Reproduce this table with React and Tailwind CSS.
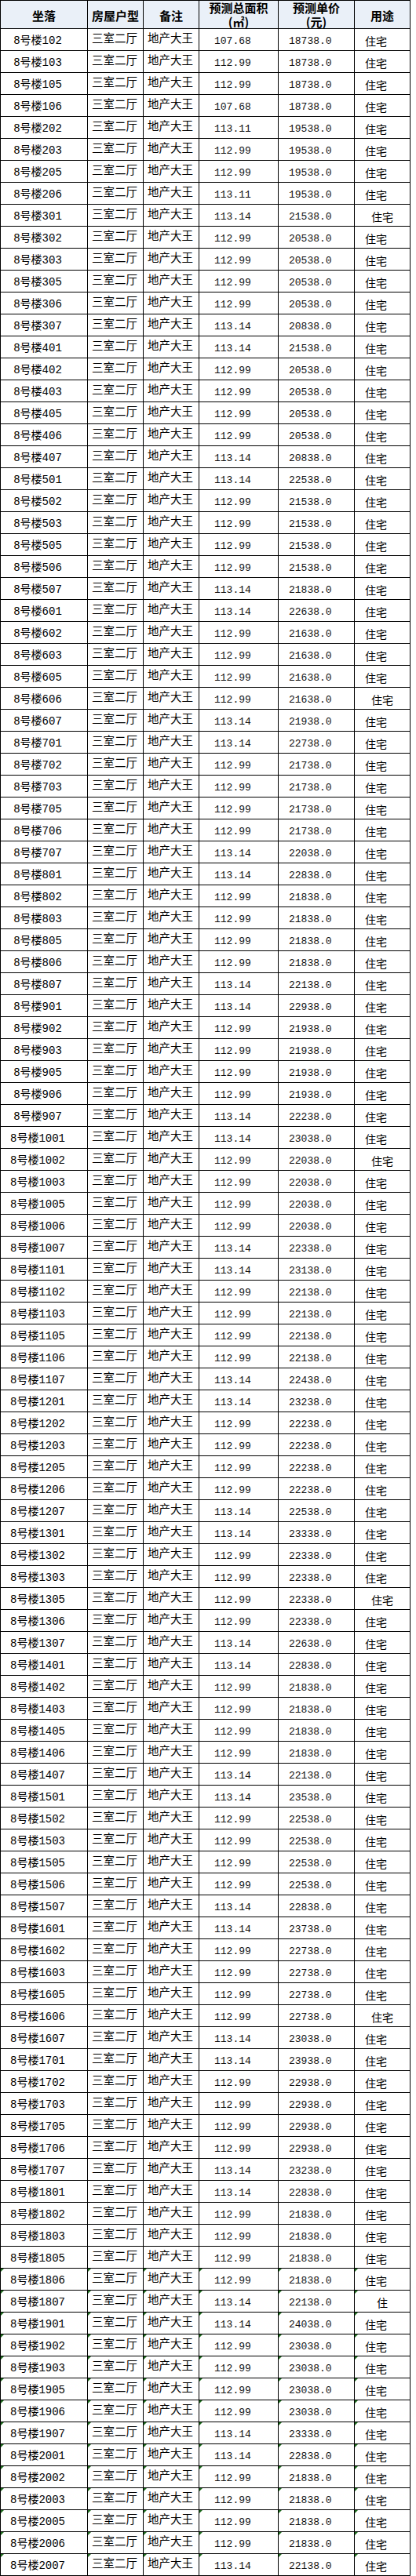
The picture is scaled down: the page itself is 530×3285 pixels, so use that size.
import React from "react";

const RAW = `102 107.68 18738 0
103 112.99 18738 0
105 112.99 18738 0
106 107.68 18738 0
202 113.11 19538 0
203 112.99 19538 0
205 112.99 19538 0
206 113.11 19538 0
301 113.14 21538 1
302 112.99 20538 0
303 112.99 20538 0
305 112.99 20538 0
306 112.99 20538 0
307 113.14 20838 0
401 113.14 21538 0
402 112.99 20538 0
403 112.99 20538 0
405 112.99 20538 0
406 112.99 20538 0
407 113.14 20838 0
501 113.14 22538 0
502 112.99 21538 0
503 112.99 21538 0
505 112.99 21538 0
506 112.99 21538 0
507 113.14 21838 0
601 113.14 22638 0
602 112.99 21638 0
603 112.99 21638 0
605 112.99 21638 0
606 112.99 21638 1
607 113.14 21938 0
701 113.14 22738 0
702 112.99 21738 0
703 112.99 21738 0
705 112.99 21738 0
706 112.99 21738 0
707 113.14 22038 0
801 113.14 22838 0
802 112.99 21838 0
803 112.99 21838 0
805 112.99 21838 0
806 112.99 21838 0
807 113.14 22138 0
901 113.14 22938 0
902 112.99 21938 0
903 112.99 21938 0
905 112.99 21938 0
906 112.99 21938 0
907 113.14 22238 0
1001 113.14 23038 0
1002 112.99 22038 1
1003 112.99 22038 0
1005 112.99 22038 0
1006 112.99 22038 0
1007 113.14 22338 0
1101 113.14 23138 0
1102 112.99 22138 0
1103 112.99 22138 0
1105 112.99 22138 0
1106 112.99 22138 0
1107 113.14 22438 0
1201 113.14 23238 0
1202 112.99 22238 0
1203 112.99 22238 0
1205 112.99 22238 0
1206 112.99 22238 0
1207 113.14 22538 0
1301 113.14 23338 0
1302 112.99 22338 0
1303 112.99 22338 0
1305 112.99 22338 1
1306 112.99 22338 0
1307 113.14 22638 0
1401 113.14 22838 0
1402 112.99 21838 0
1403 112.99 21838 0
1405 112.99 21838 0
1406 112.99 21838 0
1407 113.14 22138 0
1501 113.14 23538 0
1502 112.99 22538 0
1503 112.99 22538 0
1505 112.99 22538 0
1506 112.99 22538 0
1507 113.14 22838 0
1601 113.14 23738 0
1602 112.99 22738 0
1603 112.99 22738 0
1605 112.99 22738 0
1606 112.99 22738 1
1607 113.14 23038 0
1701 113.14 23938 0
1702 112.99 22938 0
1703 112.99 22938 0
1705 112.99 22938 0
1706 112.99 22938 0
1707 113.14 23238 0
1801 113.14 22838 0
1802 112.99 21838 0
1803 112.99 21838 0
1805 112.99 21838 0
1806 112.99 21838 0
1807 113.14 22138 2
1901 113.14 24038 0
1902 112.99 23038 0
1903 112.99 23038 0
1905 112.99 23038 0
1906 112.99 23038 0
1907 113.14 23338 0
2001 113.14 22838 0
2002 112.99 21838 0
2003 112.99 21838 0
2005 112.99 21838 0
2006 112.99 21838 0
2007 113.14 22138 0`;

const ROWS = RAW.split("\n").map((l) => {
  const [room, area, price, s] = l.trim().split(" ");
  return { room, area, price: price + ".0", shift: Number(s) };
});

const USE_PAD = ["pl-[13px]", "pl-[21px]", "pl-[28px]"];
const GRID = "grid grid-cols-[111px_71px_71px_101px_97px_71px]";
const CELL = "relative border-r border-black";

function Flag({ on }) {
  if (!on) return null;
  return (
    <span className="absolute left-0 top-0 w-0 h-0 border-t-[4px] border-r-[4px] border-t-[#1d6b1d] border-r-transparent" />
  );
}

function Row({ r, idx }) {
  const flag = idx >= 102;
  return (
    <div className={`${GRID} h-[28px] border-b border-black`}>
      <div className={`${CELL} flex items-center justify-center pr-[16px] pt-[3px] font-['Liberation_Mono','Noto_Sans_CJK_SC',monospace] text-[14px] leading-[16px]`}>
        <Flag on={flag} />
        8号楼{r.room}
      </div>
      <div className={`${CELL} pl-[5px] pt-[3px] text-[14.5px] leading-[16px]`}>
        <Flag on={flag} />
        三室二厅
      </div>
      <div className={`${CELL} pl-[5px] pt-[3px] text-[14.5px] leading-[16px]`}>
        <Flag on={flag} />
        地产大王
      </div>
      <div className={`${CELL} flex items-center pl-[19px] pt-[4px] font-['Liberation_Mono',monospace] text-[13px] leading-[16px] text-[#111]`}>
        <Flag on={flag} />
        {r.area}
      </div>
      <div className={`${CELL} flex items-center pl-[13px] pt-[4px] font-['Liberation_Mono',monospace] text-[13px] leading-[16px] text-[#111]`}>
        <Flag on={flag} />
        {r.price}
      </div>
      <div className={`${CELL} flex items-center ${USE_PAD[r.shift]} pt-[3px] text-[14px] leading-[16px]`}>
        <Flag on={flag} />
        {r.shift === 2 ? "住" : "住宅"}
      </div>
    </div>
  );
}

export default function App() {
  return (
    <div className="w-[530px] bg-white text-black font-['Noto_Sans_CJK_SC',sans-serif]">
      <div className="w-[523px] border-l border-t border-black">
        <div className={`${GRID} h-[36px] border-b border-black bg-[#eaf0f8] font-bold text-[15px]`}>
          <div className={`${CELL} flex items-center justify-center pt-[3px]`}>坐落</div>
          <div className={`${CELL} flex items-center justify-center pt-[3px]`}>房屋户型</div>
          <div className={`${CELL} flex items-center justify-center pt-[3px]`}>备注</div>
          <div className={`${CELL} flex flex-col items-center justify-center leading-[18px]`}>
            <span>预测总面积</span>
            <span>(㎡)</span>
          </div>
          <div className={`${CELL} flex flex-col items-center justify-center leading-[18px]`}>
            <span>预测单价</span>
            <span>(元)</span>
          </div>
          <div className={`${CELL} flex items-center justify-center pt-[3px]`}>用途</div>
        </div>
        {ROWS.map((r, i) => (
          <Row key={r.room} r={r} idx={i} />
        ))}
      </div>
    </div>
  );
}
